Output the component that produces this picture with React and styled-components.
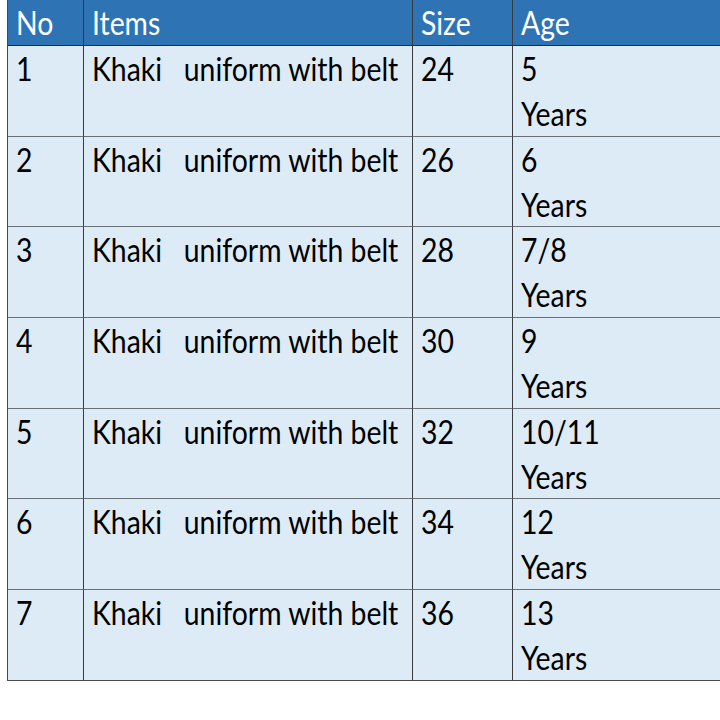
import React from "react";
import styled, { createGlobalStyle } from "styled-components";

const Global = createGlobalStyle`
  html, body { margin: 0; padding: 0; background: #ffffff; }
  body { width: 720px; height: 720px; overflow: hidden; }
`;

const Table = styled.div`
  margin-left: 7px;
  width: 713px;
  display: grid;
  grid-template-columns: 75px 329px 100px 1fr;
  border-left: 1px solid #4a4a4a;
  border-right: 1px solid #4a4a4a;
  border-bottom: 1px solid #4a4a4a;
  font-family: Lato, "Open Sans", sans-serif;
  font-size: 33px;
  line-height: 45px;
`;

const Cell = styled.div`
  box-sizing: border-box;
  height: ${(p) => (p.$head ? "45px" : "90.7px")};
  padding-left: 8px;
  background: ${(p) => (p.$head ? "#2e74b5" : "#ddebf7")};
  color: ${(p) => (p.$head ? "#ffffff" : "#000000")};
  border-left: ${(p) => (p.$first ? "none" : "1px solid #3a3a3a")};
  border-top: ${(p) =>
    p.$head ? "none" : p.$afterHead ? "1px solid #2a2a2a" : "1.5px solid #6a6f78"};
  white-space: nowrap;
`;

const Squeeze = styled.span`
  display: inline-block;
  transform: scaleX(0.86);
  transform-origin: left center;
`;

const Line = styled.div`
  height: 45px;
`;

const rows = [
  ["1", "24", "5"],
  ["2", "26", "6"],
  ["3", "28", "7/8"],
  ["4", "30", "9"],
  ["5", "32", "10/11"],
  ["6", "34", "12"],
  ["7", "36", "13"],
];

export default function App() {
  return (
    <>
      <Global />
      <Table>
        {["No", "Items", "Size", "Age"].map((h, i) => (
          <Cell key={h} $head $first={i === 0}>
            <Squeeze>{h}</Squeeze>
          </Cell>
        ))}
        {rows.map(([n, s, a], r) => (
          <React.Fragment key={n}>
            <Cell $first $afterHead={r === 0}>
              <Squeeze>{n}</Squeeze>
            </Cell>
            <Cell $afterHead={r === 0}>
              <Squeeze>Khaki&nbsp;&nbsp;&nbsp;uniform with belt</Squeeze>
            </Cell>
            <Cell $afterHead={r === 0}>
              <Squeeze>{s}</Squeeze>
            </Cell>
            <Cell $afterHead={r === 0}>
              <Line>
                <Squeeze>{a}</Squeeze>
              </Line>
              <Line>
                <Squeeze>Years</Squeeze>
              </Line>
            </Cell>
          </React.Fragment>
        ))}
      </Table>
    </>
  );
}
